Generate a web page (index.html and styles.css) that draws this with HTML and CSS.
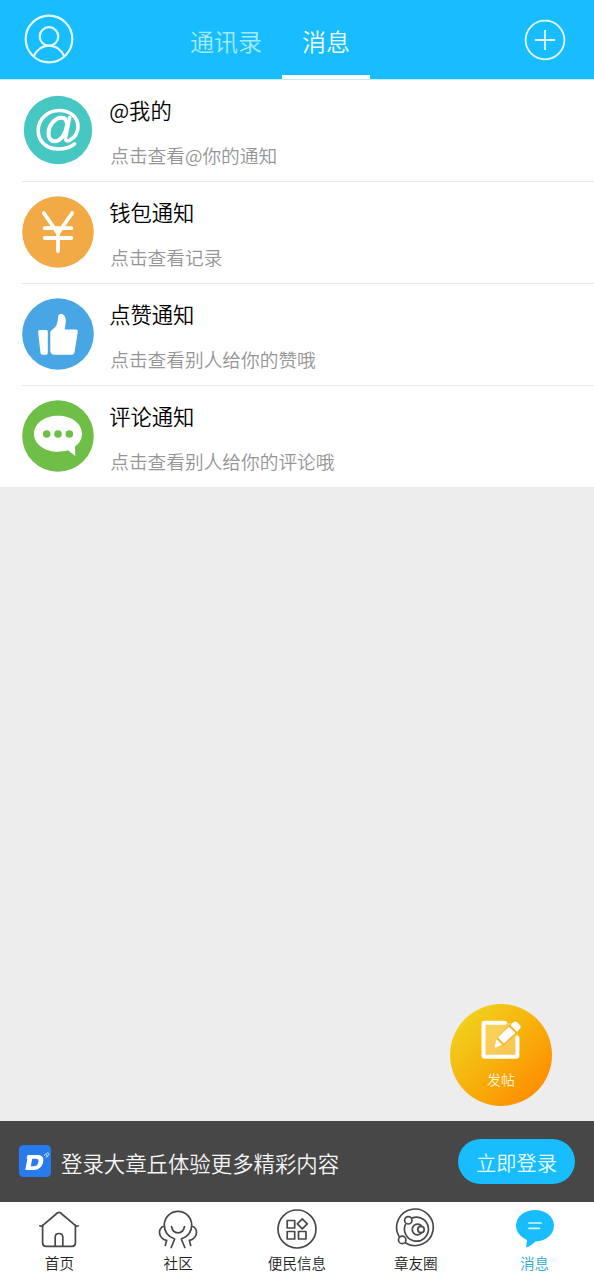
FILE: index.html
```html
<!DOCTYPE html>
<html lang="zh-CN">
<head>
<meta charset="utf-8">
<title>消息</title>
<link rel="stylesheet" href="styles.css">
</head>
<body>
<div class="app">
  <header class="header">
    <svg class="avatar" width="50" height="50" viewBox="0 0 50 50"><circle cx="25" cy="25" r="23.3"/><circle cx="25" cy="22.500" r="9.3"/><path d="M9.500 42.500C13 35.500 18.500 31.600 25 31.600s12 3.900 15.500 10.900"/></svg>
    <nav class="tabs">
      <span class="tab">通讯录</span>
      <span class="tab tab-active">消息</span>
    </nav>
    <svg class="add" width="42" height="42" viewBox="0 0 42 42"><circle cx="21" cy="21" r="19.400"/><path d="M11 21h20M21 11v20"/></svg>
  </header>

  <main class="list">
    <div class="row">
      <svg class="icon" width="72" height="72" viewBox="0 0 72 72"><circle cx="36" cy="36" r="34.200" fill="#47c7c1"/>
        <g fill="none" stroke="#fff" stroke-linecap="round" stroke-linejoin="round"><path stroke-width="4" d="M45 31c0-4.500-2-7.200-5.500-7.200-7 0-13 8.200-13 15.700 0 4.800 2.300 7.700 6.200 7.700 6.300 0 11.500-8.200 12.300-16.200z"/><path stroke-width="3.600" d="M47.700 23.500L43.700 43c-.7 3.300 1 4.600 3.800 3.300 4.900-2.500 8.500-7.500 8.500-13.800C56 23 47.800 16.500 37.500 16.500 25.500 16.500 16.200 25.200 16.200 36.500c0 11 8.400 18.500 19.800 18.500 6.500 0 12.500-1.800 16.600-5.200"/></g></svg>
      <div class="copy"><div class="title">@我的</div><div class="hint">点击查看@你的通知</div></div>
    </div>
    <div class="row">
      <svg class="icon" width="72" height="72" viewBox="0 0 72 72"><circle cx="36" cy="36" r="35.800" fill="#f2aa47"/><path d="M21.800 17L36 37.500 50.200 17M22.700 32.200h26.600M22.700 42h26.600M36 36v19" fill="none" stroke="#fff" stroke-width="3.800" stroke-linecap="round"/></svg>
      <div class="copy"><div class="title">钱包通知</div><div class="hint">点击查看记录</div></div>
    </div>
    <div class="row">
      <svg class="icon" width="72" height="72" viewBox="0 0 72 72"><circle cx="36" cy="36" r="35.800" fill="#49a6e4"/><path fill="#fff" d="M17.500 32h6.800q1.500 0 1.500 1.500v21.800q0 1.400-1.500 1.400h-3.800q-1.800 0-2-1.800L16.100 34q-.1-2 1.400-2zM28.300 34.500q0-1.500 1.300-2.300 4.700-3.200 5.400-6.700.8-2.500 1-6.300c.2-2.700 1.800-3.500 3.500-3.200 2.900.5 4.400 3.500 4.300 7.500-.1 3.300-.8 5.300-1.100 8h11.200q2.200 0 1.900 2.200l-3.300 20.700q-.5 2.300-2.800 2.300H32.500q-4.200 0-4.200-4.200z"/></svg>
      <div class="copy"><div class="title">点赞通知</div><div class="hint">点击查看别人给你的赞哦</div></div>
    </div>
    <div class="row">
      <svg class="icon" width="72" height="72" viewBox="0 0 72 72"><circle cx="36" cy="36" r="35.800" fill="#6fbe48"/><path fill="#fff" d="M36 15.700c13.500 0 24 7.800 24 18 0 5-2.500 9.600-7 12.800L53.300 56 46 50.300c-3 1-6.500 1.400-10 1.400-13.500 0-24-7.800-24-18s10.500-18 24-18z"/><g fill="#6fbe48"><circle cx="24.700" cy="34" r="3.800"/><circle cx="36" cy="34" r="3.800"/><circle cx="47.300" cy="34" r="3.800"/></g></svg>
      <div class="copy"><div class="title">评论通知</div><div class="hint">点击查看别人给你的评论哦</div></div>
    </div>
  </main>

  <section class="blank">
    <div class="post">
      <svg width="44" height="44" viewBox="0 0 44 44"><path d="M5 5h34v34H5z" fill="#fff" fill-opacity=".3"/><path d="M26 4.800H5.800q-1.300 0-1.300 1.300v31.300q0 1.300 1.300 1.300h31.300q1.300 0 1.300-1.300V19.500" fill="none" stroke="#fff" stroke-width="4" stroke-linecap="round"/><path d="M31 6L39.500 14.500 25 27 16.800 29.500 18.500 20z" fill="#f5b52b"/><g fill="#fff"><path d="M30 8.800l6.300 6.300-11.500 10.300-5.800-5.800zM17.600 21.200l5.600 5.600-6.200 2.600q-1.600.4-1.200-1.200z"/><path d="M31.500 7.300l3.300-3.200q1.600-1.400 3.200 0l3.200 3.400q1.200 1.500-.2 3L38 13.700z"/></g></svg>
      <span>发帖</span>
    </div>
  </section>

  <section class="login">
    <svg class="logo" width="32" height="32" viewBox="0 0 32 32"><rect width="32" height="32" rx="4.500" fill="#277bec"/><path fill="#fff" fill-rule="evenodd" d="M8.700 10h9.600c4.800 0 6.800 2.500 5.900 6.800C23.200 22 19.800 25 14.500 25H6.300l2.100-11.400h-1zM13.200 13.700L11.800 21.300h2.700c2.900 0 4.300-1.300 4.900-4.200.5-2.500-.2-3.400-2.800-3.400z"/><path d="M25.300 11q.3-2.500 2.700-2.300M26.600 12.300q2.600-.3 3-2.800M27 10.500l1.300-.3M28 7.800q1.800 0 2 1.700" fill="none" stroke="#d8eaff" stroke-width=".9"/></svg>
    <span class="login-text">登录大章丘体验更多精彩内容</span>
    <button class="login-btn">立即登录</button>
  </section>

  <nav class="bottom">
    <div class="item"><svg width="42" height="42" viewBox="0 0 42 42"><path d="M4.600 17v18q0 3.300 3.300 3.300h26.200q3.300 0 3.300-3.300V17M1.800 17.800q1.500.7 3-.5L19.300 5q1.700-1.300 3.400 0l14.500 12.300q1.500 1.200 3 .5M17.200 38v-9q0-3.500 3.800-3.500t3.800 3.500v9"/></svg><span>首页</span></div>
    <div class="item"><svg width="42" height="42" viewBox="0 0 42 42"><path d="M14.200 39.500L17.700 31C10.500 28.500 7.300 23.500 7.300 17a13.700 13.700 0 0 1 27.400 0c0 6.500-3.200 11.500-10.400 14l3.500 8.500M14.500 18.500c.8 4 3.200 6.300 6.500 6.300s5.700-2.300 6.500-6.300M7.500 18C3 19 1.700 23 2.900 26.700c1.100 3.300 3.400 5 6.800 5.600L8.300 37.500M34.500 18c4.500 1 5.800 5 4.600 8.700-1.100 3.300-3.400 5-6.800 5.600l1.400 5.200"/></svg><span>社区</span></div>
    <div class="item"><svg width="42" height="42" viewBox="0 0 42 42"><circle cx="21" cy="21" r="19"/><path d="M11.200 12.500h7.500V20h-7.500zM11.200 23.500h7.500V31h-7.500zM22.500 23.500H30V31h-7.500zM26.300 10.900l5 5-5 5-5-5z"/></svg><span>便民信息</span></div>
    <div class="item"><svg width="42" height="42" viewBox="0 0 42 42"><path d="M4 28.300A18.300 18.300 0 1 1 10.500 35M17.300 9.900A12 12 0 1 1 10.300 16.700"/><circle cx="13.300" cy="12.300" r="3.700"/><circle cx="7.200" cy="31.900" r="3.700"/><path d="M26.500 18a5.300 5.300 0 1 0 0 7"/><circle cx="26" cy="21.500" r="3.200"/></svg><span>章友圈</span></div>
    <div class="item item-active"><svg width="42" height="42" viewBox="0 0 42 42"><path class="solid" d="M21 2c10.700 0 19 6.800 19 15.600S31.700 33.500 21.500 33.500c-2.200 2.400-5.800 5.200-9.500 6l1-7.600C6.500 29.300 2 24 2 17.600 2 8.800 10.300 2 21 2z"/><path class="lines" d="M15 15h12M15 20.300h10.500"/></svg><span>消息</span></div>
  </nav>
</div>
</body>
</html>
```
FILE: styles.css
```css
* { box-sizing: border-box; }
body {
  margin: 0;
  font-family: "Noto Sans CJK SC DemiLight", "Noto Sans CJK SC", sans-serif;
  font-weight: 350;
  background: #ededed;
}
.app {
  width: 594px;
  height: 1280px;
  display: flex;
  flex-direction: column;
  overflow: hidden;
}
.header {
  height: 80px;
  flex: none;
  display: flex;
  align-items: flex-start;
  background: #17bdff;
  border-bottom: 1px solid #bdeeff;
}
.avatar, .add { fill: none; stroke: #e4faff; flex: none; }
.avatar { margin: 14px 0 0 24px; stroke-width: 2.2; }
.tabs { display: flex; margin-left: 96px; height: 79px; flex: 1; }
.tab {
  padding: 0 20px;
  height: 79px;
  font-size: 24px;
  line-height: 82px;
  color: #a5eafa;
}
.tab-active {
  color: #f2fdff;
  border-bottom: 4px solid #fff;
}
.add { margin: 19px 28px 0 0; stroke-width: 1.8; }

.list { background: #fff; padding-left: 22px; flex: none; }
.row {
  height: 102px;
  display: flex;
  border-bottom: 1px solid #e9e9e9;
}
.row:last-child { height: 101px; border-bottom: 0; }
.icon { flex: none; margin: 14.400px 0 0 -.3px; }
.copy { padding: 14px 0 0 15.500px; }
.title { font-size: 21.300px; line-height: 32px; color: #000; }
.hint { font-size: 18.700px; line-height: 28px; margin: 15px 0 0 1px; color: #959595; }

.blank {
  flex: 1;
  display: flex;
  justify-content: flex-end;
  align-items: flex-end;
  padding: 0 42px 15.500px 0;
}
.post {
  width: 102px;
  height: 102px;
  border-radius: 50%;
  background: linear-gradient(135deg, #f0d51e 8%, #f8ae0b 52%, #ff8700 95%);
  display: flex;
  flex-direction: column;
  align-items: center;
  padding-top: 14px;
  color: #fff5d8;
  font-size: 14px;
  line-height: 20px;
}
.post span { margin-top: 7px; }

.login {
  height: 81px;
  flex: none;
  background: #474747;
  display: flex;
  align-items: center;
  padding: 0 19px;
}
.logo { flex: none; margin-top: -1px; }
.login-text { margin: 1px 0 0 10px; font-size: 21.400px; color: #f5f5f5; flex: 1; }
.login-btn {
  width: 117px;
  height: 45px;
  padding: 2px 0 0;
  border: 0;
  border-radius: 23px;
  background: #17bdff;
  color: #e6fbff;
  font-family: inherit;
  font-size: 20.200px;
  font-weight: inherit;
  line-height: 30px;
}

.bottom {
  height: 78px;
  flex: none;
  background: #fff;
  display: grid;
  grid-template-columns: repeat(5, 1fr);
}
.item {
  display: flex;
  flex-direction: column;
  align-items: center;
  padding-top: 6px;
  font-size: 14.600px;
  line-height: 22px;
  color: #222;
}
.item svg { fill: none; stroke: #484848; stroke-width: 1.7; stroke-linecap: round; stroke-linejoin: round; flex: none; }
.item span { margin-top: 2px; }
.item-active { color: #2aa9cf; }
.item svg .solid { fill: #17bdff; stroke: none; }
.item svg .lines { stroke: #d5f8ff; }
```
